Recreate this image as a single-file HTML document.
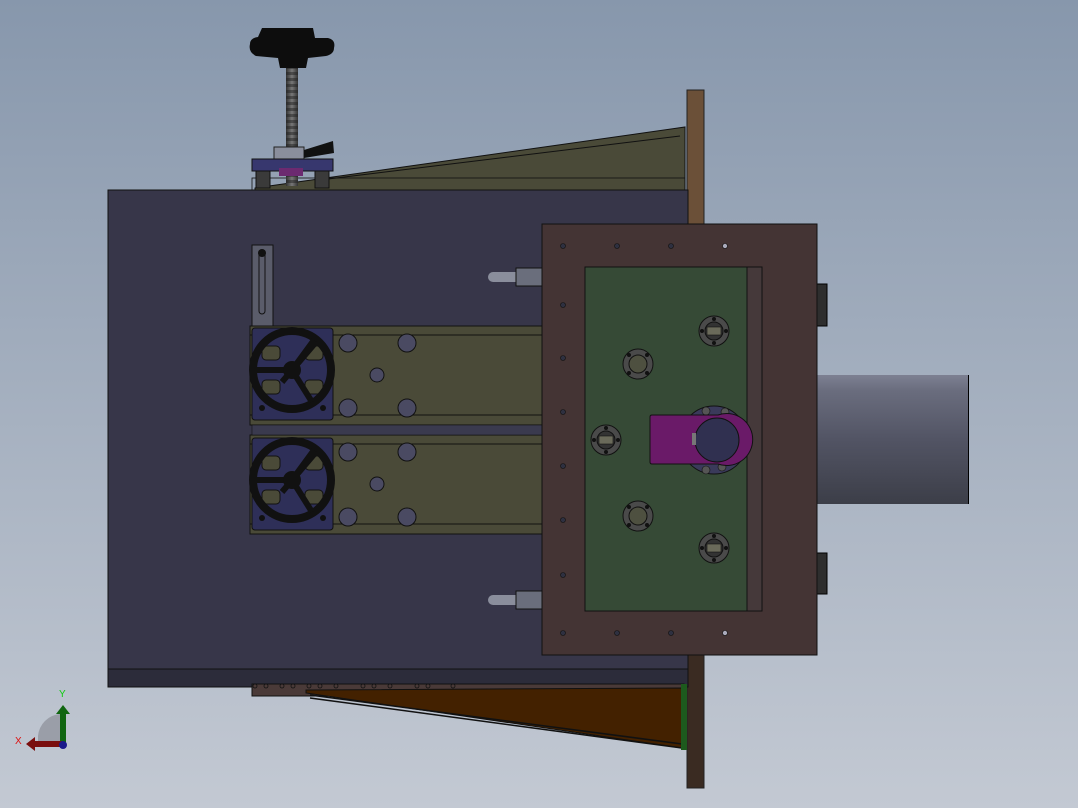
<!DOCTYPE html>
<html><head><meta charset="utf-8"><style>
html,body{margin:0;padding:0;width:1078px;height:808px;overflow:hidden}
svg{display:block}
text{font-family:"Liberation Sans",sans-serif}
</style></head><body>
<svg width="1078" height="808" viewBox="0 0 1078 808" xmlns="http://www.w3.org/2000/svg">
<defs>
<linearGradient id="bg" x1="0" y1="0" x2="0" y2="1">
<stop offset="0" stop-color="#8797ac"/><stop offset="1" stop-color="#c3c9d3"/></linearGradient>
<linearGradient id="cyl" x1="0" y1="0" x2="0" y2="1">
<stop offset="0" stop-color="#7d8092"/><stop offset="0.12" stop-color="#6a6d7e"/><stop offset="0.5" stop-color="#525464"/><stop offset="1" stop-color="#3c3e48"/></linearGradient>
<linearGradient id="screw" x1="0" y1="0" x2="1" y2="0">
<stop offset="0" stop-color="#333"/><stop offset="0.5" stop-color="#777"/><stop offset="1" stop-color="#333"/></linearGradient>
<pattern id="thr" width="8" height="6" patternUnits="userSpaceOnUse"><rect width="8" height="3" fill="#222" opacity=".5"/></pattern>
<g id="wheel">
<rect x="-40" y="-42" width="81" height="92" rx="3" fill="#2e2f58" stroke="#111" stroke-width="1"/>
<rect x="-30" y="-24" width="18" height="14" rx="4" fill="#4a4a38" stroke="#111"/>
<rect x="13" y="-24" width="18" height="14" rx="4" fill="#4a4a38" stroke="#111"/>
<rect x="-30" y="10" width="18" height="14" rx="4" fill="#4a4a38" stroke="#111"/>
<rect x="13" y="10" width="18" height="14" rx="4" fill="#4a4a38" stroke="#111"/>
<circle cx="0" cy="0" r="39" fill="none" stroke="#111" stroke-width="8"/>
<path d="M-38 0 H0 M0 0 L20 32 M0 0 L22 -30 M-10 12 L24 -28" stroke="#111" stroke-width="6" fill="none"/>
<circle cx="0" cy="0" r="9" fill="#111"/>
<circle cx="-30" cy="38" r="3" fill="#111"/><circle cx="31" cy="38" r="3" fill="#111"/>
</g>
<g id="rail">
<rect x="0" y="0" width="292" height="99" fill="#4a4a38" stroke="#111"/>
<line x1="0" y1="9" x2="292" y2="9" stroke="#111"/>
<line x1="0" y1="89" x2="292" y2="89" stroke="#111"/>
<circle cx="98" cy="17" r="9" fill="#4a4a62" stroke="#111"/><circle cx="157" cy="17" r="9" fill="#4a4a62" stroke="#111"/>
<circle cx="98" cy="82" r="9" fill="#4a4a62" stroke="#111"/><circle cx="157" cy="82" r="9" fill="#4a4a62" stroke="#111"/>
<circle cx="127" cy="49" r="7" fill="#4a4a62" stroke="#111"/>
</g>
<g id="flA">
<circle r="15" fill="#4a4a4a" stroke="#111"/><circle r="9" fill="#333" stroke="#111"/>
<rect x="-7" y="-4" width="14" height="8" fill="#6a6a5a" stroke="#111" stroke-width=".6"/>
<circle cx="0" cy="-12" r="2" fill="#111"/><circle cx="0" cy="12" r="2" fill="#111"/><circle cx="-12" cy="0" r="2" fill="#111"/><circle cx="12" cy="0" r="2" fill="#111"/>
</g>
<g id="flB">
<circle r="15" fill="#4a4a4a" stroke="#111"/><circle r="9" fill="#4e5040" stroke="#111"/>
<circle cx="-9" cy="-9" r="2" fill="#111"/><circle cx="9" cy="9" r="2" fill="#111"/><circle cx="-9" cy="9" r="2" fill="#111"/><circle cx="9" cy="-9" r="2" fill="#111"/>
</g>
</defs>
<rect width="1078" height="808" fill="url(#bg)"/>

<!-- top wedge -->
<polygon points="255,188 685,127 685,190 255,190" fill="#4a4a38" stroke="#111"/>
<line x1="320" y1="180" x2="680" y2="136" stroke="#111"/>
<rect x="252" y="178" width="433" height="12" fill="none" stroke="#111" stroke-width=".8"/>
<!-- knob assembly -->
<rect x="286" y="58" width="12" height="128" fill="url(#screw)"/>
<rect x="286" y="58" width="12" height="128" fill="url(#thr)"/>
<path d="M262 28 H313 L315 38 H328 Q336 40 334 48 Q334 54 326 56 L308 58 L306 68 H280 L278 58 L256 56 Q248 52 250 44 Q250 38 258 37 Z" fill="#0d0d0d"/>
<rect x="274" y="147" width="30" height="15" fill="#8a8e9c" stroke="#222"/>
<polygon points="304,150 333,141 334,153 304,158" fill="#111"/>
<rect x="252" y="159" width="81" height="12" fill="#37376e" stroke="#111"/>
<rect x="279" y="168" width="24" height="8" fill="#6c2a70"/>
<rect x="256" y="171" width="14" height="17" fill="#3a3a3a" stroke="#111"/>
<rect x="315" y="171" width="14" height="17" fill="#3a3a3a" stroke="#111"/>

<!-- brown plate -->
<rect x="687" y="90" width="17" height="568" fill="#6b5038" stroke="#222"/>
<rect x="687" y="655" width="17" height="133" fill="#3a2b22" stroke="#222"/>

<!-- main box -->
<rect x="108" y="190" width="580" height="497" fill="#373649" stroke="#111"/>
<rect x="108" y="669" width="580" height="18" fill="#2c2c3a" stroke="#111"/>

<!-- bottom wedge -->
<rect x="252" y="684" width="432" height="12" fill="#4a3a38" stroke="#111"/>
<polygon points="306,690 682,688 682,748 306,693" fill="#432100" stroke="#111"/>
<line x1="310" y1="695" x2="682" y2="744" stroke="#111" stroke-width="1.5"/>
<line x1="310" y1="698" x2="682" y2="748" stroke="#111" stroke-width="1.5"/>
<rect x="681" y="684" width="6" height="66" fill="#1d5a1d"/>
<g fill="none" stroke="#111" stroke-width=".8">
<circle cx="255" cy="686" r="2"/><circle cx="266" cy="686" r="2"/><circle cx="282" cy="686" r="2"/><circle cx="293" cy="686" r="2"/><circle cx="309" cy="686" r="2"/><circle cx="320" cy="686" r="2"/><circle cx="336" cy="686" r="2"/><circle cx="363" cy="686" r="2"/><circle cx="374" cy="686" r="2"/><circle cx="390" cy="686" r="2"/><circle cx="417" cy="686" r="2"/><circle cx="428" cy="686" r="2"/><circle cx="453" cy="686" r="2"/>
</g>

<!-- slot bar -->
<rect x="252" y="245" width="21" height="82" fill="#5a5c6a" stroke="#111"/>
<rect x="259" y="252" width="6" height="62" rx="3" fill="none" stroke="#111"/>
<circ cx="262" cy="253"/>
<circle cx="262" cy="253" r="4" fill="#111"/>

<!-- rails -->
<use href="#rail" x="250" y="326"/>
<use href="#rail" x="250" y="435"/>
<rect x="252" y="425" width="290" height="10" fill="#3a3a4e" stroke="#111" stroke-width=".6"/>
<use href="#wheel" x="292" y="370"/>
<use href="#wheel" x="292" y="480"/>

<!-- pins -->
<g>
<rect x="488" y="272" width="40" height="10" rx="5" fill="#8a8e9c"/><rect x="516" y="268" width="26" height="18" fill="#6a6e7c" stroke="#111"/>
<rect x="488" y="595" width="40" height="10" rx="5" fill="#8a8e9c"/><rect x="516" y="591" width="26" height="18" fill="#6a6e7c" stroke="#111"/>
</g>

<!-- cylinder -->
<rect x="817" y="375" width="152" height="129" fill="url(#cyl)"/>
<line x1="968.5" y1="375" x2="968.5" y2="504" stroke="#000"/>
<rect x="815" y="284" width="12" height="42" fill="#2e2e2e" stroke="#000"/>
<rect x="815" y="553" width="12" height="41" fill="#2e2e2e" stroke="#000"/>

<!-- frame -->
<rect x="542" y="224" width="275" height="431" fill="#443434" stroke="#111"/>
<rect x="585" y="267" width="177" height="344" fill="#364a36" stroke="#111"/>
<rect x="747" y="267" width="15" height="344" fill="#45393a" stroke="#111"/>
<g fill="#2e3040" stroke="#111" stroke-width=".6">
<circle cx="563" cy="246" r="2.5"/><circle cx="617" cy="246" r="2.5"/><circle cx="671" cy="246" r="2.5"/><circle cx="725" cy="246" r="2.5" fill="#aab"/>
<circle cx="563" cy="633" r="2.5"/><circle cx="617" cy="633" r="2.5"/><circle cx="671" cy="633" r="2.5"/><circle cx="725" cy="633" r="2.5" fill="#aab"/>
<circle cx="563" cy="305" r="2.5"/><circle cx="563" cy="358" r="2.5"/><circle cx="563" cy="412" r="2.5"/><circle cx="563" cy="466" r="2.5"/><circle cx="563" cy="520" r="2.5"/><circle cx="563" cy="575" r="2.5"/>
</g>
<use href="#flA" x="714" y="331"/>
<use href="#flA" x="714" y="548"/>
<use href="#flA" x="606" y="440"/>
<use href="#flB" x="638" y="364"/>
<use href="#flB" x="638" y="516"/>
<!-- hub -->
<circle cx="714" cy="440" r="34" fill="#3a3a5a" stroke="#111"/>
<g fill="#555" stroke="#111" stroke-width=".6">
<circle cx="725" cy="412" r="4"/><circle cx="738" cy="422" r="4"/><circle cx="742" cy="440" r="4" fill="#888"/><circle cx="737" cy="457" r="4"/><circle cx="722" cy="467" r="4"/><circle cx="706" cy="470" r="4"/><circle cx="706" cy="411" r="4"/>
</g>
<path d="M652 415 H718 A26 26 0 1 1 718 464 H652 Q650 464 650 462 V417 Q650 415 652 415 Z" fill="#6a1a68" stroke="#111"/>
<circle cx="717" cy="440" r="22" fill="#303050" stroke="#111"/>
<rect x="692" y="433" width="4" height="12" fill="#777"/>

<!-- triad -->
<path d="M38 745 V736 A24 24 0 0 1 60 714 V745 Z" fill="#9a9ea8"/>
<rect x="60" y="713" width="6" height="32" fill="#116611"/>
<polygon points="56,714 63,705 70,714" fill="#116611"/>
<rect x="34" y="741" width="28" height="6" fill="#7a0e0e"/>
<polygon points="35,737 26,744 35,751" fill="#7a0e0e"/>
<circle cx="63" cy="745" r="4" fill="#1a1a8a"/>
<text x="59" y="697" font-size="10" fill="#11cc11">Y</text>
<text x="15" y="744" font-size="10" fill="#dd1111">X</text>
</svg>
</body></html>
